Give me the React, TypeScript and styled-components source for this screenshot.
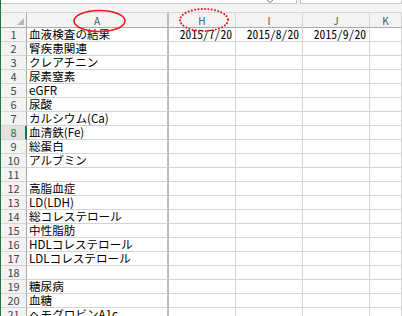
import React from "react";
import styled, { createGlobalStyle, css } from "styled-components";

const GlobalStyle = createGlobalStyle`
  html, body { margin: 0; padding: 0; background: #ffffff; overflow: hidden; }
  * { box-sizing: border-box; }
`;

const JP = `"Noto Sans CJK JP", "Noto Sans", sans-serif`;

const Frame = styled.div`
  position: relative;
  width: 402px;
  height: 316px;
  overflow: hidden;
`;

const Sheet = styled.div`
  width: 402px;
  height: 316px;
  border-left: 1px solid #217346;
  background: #ffffff;
  display: flex;
  flex-direction: column;
`;

const TopBar = styled.div`
  height: 12px;
  flex-shrink: 0;
  display: flex;
  gap: 3px;
  background: #f3f3f3;
`;

const Box = styled.div<{ $w?: number }>`
  height: 4px;
  background: #ffffff;
  border-bottom: 1px solid #c6c6c6;
  border-right: 1px solid #c6c6c6;
  border-left: 1px solid #c6c6c6;
  ${(p) => (p.$w ? css`width: ${p.$w}px; border-left: none;` : css`flex: 1;`)}
  display: flex;
  justify-content: flex-end;
  align-items: flex-end;
  padding-right: 23px;
`;

const Grid = styled.div`
  display: grid;
  grid-template-columns: 26px 142px 67px 67px 67px 1fr;
  grid-template-rows: 16px;
  grid-auto-rows: 14px;
`;

const HeadCell = styled.div<{ $thick?: boolean }>`
  background: #f3f3f3;
  border-top: 1px solid #d5d5d5;
  border-bottom: 1px solid #ababab;
  border-right: ${(p) => (p.$thick ? "2px solid #bdbdbd" : "1px solid #d5d5d5")};
  display: flex;
  align-items: center;
  justify-content: center;
  font-family: ${JP};
  font-size: 10px;
  line-height: 12px;
  color: #44546a;
  padding-top: 1px;
`;

const Corner = styled(HeadCell)`
  justify-content: flex-end;
  align-items: flex-end;
  padding: 0 2px 2px 0;
  border-right: 1px solid #ababab;
`;

const RowHead = styled.div<{ $sel?: boolean }>`
  background: ${(p) => (p.$sel ? "#e1e1e1" : "#f3f3f3")};
  color: ${(p) => (p.$sel ? "#217346" : "#444444")};
  border-right: ${(p) => (p.$sel ? "2px solid #217346" : "1px solid #ababab")};
  border-bottom: 1px solid #d5d5d5;
  display: flex;
  align-items: flex-end;
  justify-content: center;
  font-family: ${JP};
  font-size: 11px;
  line-height: 13px;
  overflow: hidden;
  padding-left: ${(p) => (p.$sel ? "1px" : "0")};
`;

const Cell = styled.div<{ $thick?: boolean; $date?: boolean }>`
  border-right: ${(p) => (p.$thick ? "2px solid #bdbdbd" : "1px solid #d4d4d4")};
  border-bottom: 1px solid #d4d4d4;
  display: flex;
  align-items: flex-end;
  justify-content: ${(p) => (p.$date ? "flex-end" : "flex-start")};
  padding: 0 ${(p) => (p.$date ? "3px" : "0")} 0 ${(p) => (p.$date ? "0" : "2px")};
  font-family: ${(p) =>
    p.$date ? `"Noto Sans Mono CJK JP", "Noto Sans CJK JP", monospace` : JP};
  font-feature-settings: ${(p) => (p.$date ? `"hwid"` : "normal")};
  font-size: 11.6px;
  line-height: 13px;
  color: #000000;
  white-space: nowrap;
  overflow: hidden;
`;

const Overlay = styled.svg`
  position: absolute;
  left: 0;
  top: 0;
  pointer-events: none;
`;

const items: string[] = [
  "血液検査の結果",
  "腎疾患関連",
  "クレアチニン",
  "尿素窒素",
  "eGFR",
  "尿酸",
  "カルシウム(Ca)",
  "血清鉄(Fe)",
  "総蛋白",
  "アルブミン",
  "",
  "高脂血症",
  "LD(LDH)",
  "総コレステロール",
  "中性脂肪",
  "HDLコレステロール",
  "LDLコレステロール",
  "",
  "糖尿病",
  "血糖",
  "ヘモグロビンA1c",
];

const dates = ["2015/7/20", "2015/8/20", "2015/9/20"];
const columns = ["H", "I", "J", "K"];

export default function App() {
  return (
    <>
      <GlobalStyle />
      <Frame>
        <Sheet>
          <TopBar>
            <Box $w={296}>
              <svg width="6" height="3" viewBox="0 0 6 3">
                <path d="M0 0 L3 2.5 L6 0" fill="none" stroke="#7a7a7a" strokeWidth="1" />
              </svg>
            </Box>
            <Box />
          </TopBar>
          <Grid>
            <Corner>
              <svg width="7" height="7" viewBox="0 0 7 7">
                <polygon points="7,0 7,7 0,7" fill="#b8b8b8" />
              </svg>
            </Corner>
            <HeadCell $thick>A</HeadCell>
            {columns.map((c) => (
              <HeadCell key={c}>{c}</HeadCell>
            ))}
            {items.map((label, i) => {
              const row = i + 1;
              return (
                <React.Fragment key={row}>
                  <RowHead $sel={row === 8}>{row}</RowHead>
                  <Cell $thick>{label}</Cell>
                  {dates.map((d) => (
                    <Cell key={d} $date>
                      {row === 1 ? d : ""}
                    </Cell>
                  ))}
                  <Cell />
                </React.Fragment>
              );
            })}
          </Grid>
        </Sheet>
        <Overlay width="402" height="316" viewBox="0 0 402 316">
          <ellipse cx="99.5" cy="21" rx="25.5" ry="10.5" fill="none" stroke="#f01818" strokeWidth="1.6" />
          <ellipse
            cx="204"
            cy="20"
            rx="24"
            ry="11"
            fill="none"
            stroke="#f01818"
            strokeWidth="2"
            strokeDasharray="0.1 3.2"
            strokeLinecap="round"
          />
        </Overlay>
      </Frame>
    </>
  );
}
